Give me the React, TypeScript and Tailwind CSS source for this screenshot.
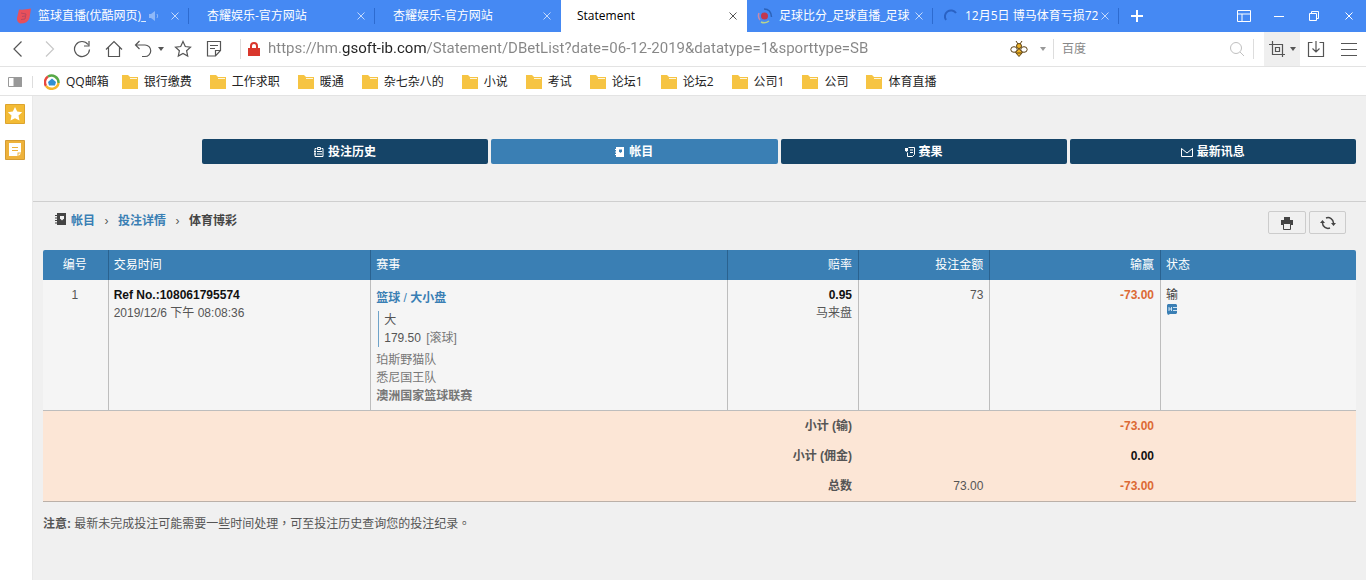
import type { ReactNode } from "react";
import clsx from "clsx";

type Tab = { id: number; title: string; icon?: ReactNode; muted?: boolean; active?: boolean };

type Bet = {
  no: number;
  refNo: string;
  time: string;
  sport: string;
  market: string;
  pick: string;
  line: string;
  live: string;
  home: string;
  away: string;
  league: string;
  odds: string;
  oddsType: string;
  stake: string;
  winLoss: string;
  status: string;
};

const bookmarks = [
  "银行缴费",
  "工作求职",
  "暖通",
  "杂七杂八的",
  "小说",
  "考试",
  "论坛1",
  "论坛2",
  "公司1",
  "公司",
  "体育直播",
];

const bets: Bet[] = [
  {
    no: 1,
    refNo: "108061795574",
    time: "2019/12/6 下午 08:08:36",
    sport: "篮球",
    market: "大小盘",
    pick: "大",
    line: "179.50",
    live: "[滚球]",
    home: "珀斯野猫队",
    away: "悉尼国王队",
    league: "澳洲国家篮球联赛",
    odds: "0.95",
    oddsType: "马来盘",
    stake: "73",
    winLoss: "-73.00",
    status: "输",
  },
];

const totals = [
  { label: "小计 (输)", stake: "", winLoss: "-73.00" },
  { label: "小计 (佣金)", stake: "", winLoss: "0.00" },
  { label: "总数", stake: "73.00", winLoss: "-73.00" },
];

function Icon({ size = 18, className, children }: { size?: number; className?: string; children: ReactNode }) {
  return (
    <svg
      width={size}
      height={size}
      viewBox={`0 0 ${size} ${size}`}
      fill="none"
      stroke="currentColor"
      aria-hidden="true"
      className={clsx("shrink-0", className)}
    >
      {children}
    </svg>
  );
}

function Caret({ className }: { className?: string }) {
  return (
    <Icon size={6} className={className}>
      <path d="M0 1h6L3 5z" fill="currentColor" stroke="none" />
    </Icon>
  );
}

function CloseIcon() {
  return (
    <Icon size={10}>
      <path d="M1.5 1.5l7 7M8.500 1.500l-7 7" />
    </Icon>
  );
}

const tabs: Tab[] = [
  {
    id: 1,
    title: "篮球直播(优酷网页)_",
    muted: true,
    icon: (
      <Icon size={16}>
        <path d="M3 1.500Q9 2 15 .5L13.500 10Q12 15.500 4 15.500Q.5 13.500 1 10z" fill="#e8505b" stroke="none" />
        <path d="M5 5l5 1-1 5-4 .5M6 8.500l3-.5" stroke="#b9475f" />
      </Icon>
    ),
  },
  { id: 2, title: "杏耀娱乐-官方网站" },
  { id: 3, title: "杏耀娱乐-官方网站" },
  { id: 4, title: "Statement", active: true },
  {
    id: 5,
    title: "足球比分_足球直播_足球",
    icon: (
      <Icon size={16}>
        <circle cx="7.500" cy="8" r="3.500" fill="#c2384f" stroke="none" />
        <path d="M2 5Q.5 9 3 12" stroke="#c98aa8" strokeWidth="1.500" />
        <path d="M4 14q4 2 8-1" stroke="#b7d38d" strokeWidth="1.500" />
        <path d="M7 1q7 0 7.500 8" stroke="#2c62b8" strokeWidth="1.500" />
      </Icon>
    ),
  },
  {
    id: 6,
    title: "12月5日 博马体育亏损72",
    icon: (
      <Icon size={16}>
        <path d="M3 12A6 6 0 1 1 13 5" stroke="#2a62c4" strokeWidth="2" />
      </Icon>
    ),
  },
];

function TabStrip() {
  return (
    <header className="flex h-8 bg-[#4589f3] pl-[3px] text-white">
      <div role="tablist" className="flex min-w-0">
        {tabs.map((tab) => (
          <div
            key={tab.id}
            className={clsx(
              "flex w-[186px] min-w-0 items-center",
              tab.icon ? "pl-2.5" : tab.active ? "pl-4" : "pl-[18px]",
              tab.active && "bg-white text-black",
            )}
          >
            <button
              type="button"
              role="tab"
              aria-selected={!!tab.active}
              className={clsx("flex min-w-0 flex-1 items-center gap-1.5 text-left", tab.muted && "pl-[3px]")}
            >
              {tab.icon}
              <span className="overflow-hidden whitespace-nowrap">{tab.title}</span>
              {tab.muted && (
                <Icon size={12} className="-ml-1 text-[#8fb8f8]">
                  <path d="M1 4h2l4-3v10L3 8H1z" fill="currentColor" stroke="none" />
                  <path d="M9 4q1.500 2 0 4" />
                </Icon>
              )}
            </button>
            <button type="button" aria-label="关闭标签" className={tab.active ? "text-[#555]" : "text-[#c3d9fc]"}>
              <CloseIcon />
            </button>
            <span className={clsx("ml-2 h-4 w-px", !tab.active && tab.id !== 3 && "bg-[#2d6bd0]")} />
          </div>
        ))}
      </div>
      <button type="button" aria-label="新标签" className="flex w-9 items-center justify-center">
        <Icon size={12}>
          <path d="M6 0v12M0 6h12" strokeWidth="2" />
        </Icon>
      </button>
      <div className="ml-auto flex">
        <button type="button" aria-label="布局" className="flex w-[35px] items-center justify-center">
          <Icon size={14}>
            <path d="M.5 1.500h13v11H.5zM.5 5h13M5 5v7.500" />
          </Icon>
        </button>
        <button type="button" aria-label="最小化" className="flex w-[35px] items-center justify-center">
          <Icon size={10}>
            <path d="M0 5.500h10" />
          </Icon>
        </button>
        <button type="button" aria-label="还原" className="flex w-[35px] items-center justify-center">
          <Icon size={10}>
            <path d="M.5 2.500h7v7h-7zM2.500 2.500v-2h7v7h-2" />
          </Icon>
        </button>
        <button type="button" aria-label="关闭" className="flex w-[35px] items-center justify-center">
          <CloseIcon />
        </button>
      </div>
    </header>
  );
}

function AddressBar() {
  return (
    <div className="flex h-[35px] items-center border-b border-[#e3e3e3] bg-white text-[#555]">
      <button type="button" aria-label="后退" className="flex w-8 justify-center pl-1">
        <Icon>
          <path d="M12.500 1.500L5 9l7.500 7.500" strokeWidth="1.200" />
        </Icon>
      </button>
      <button type="button" aria-label="前进" className="flex w-9 justify-center text-[#c8c8c8]">
        <Icon>
          <path d="M5 1.500L12.500 9 5 16.500" strokeWidth="1.200" />
        </Icon>
      </button>
      <button type="button" aria-label="刷新" className="flex w-7 justify-center">
        <Icon>
          <path d="M15 4.500A7.500 7.500 0 1 0 16.500 9.500M16 1v5h-5" strokeWidth="1.200" />
        </Icon>
      </button>
      <button type="button" aria-label="主页" className="flex w-9 justify-center">
        <Icon>
          <path d="M1 9.500L9 1.500l8 8M3.500 7.500v9h11v-9" strokeWidth="1.200" />
        </Icon>
      </button>
      <button type="button" aria-label="恢复" className="flex items-center gap-1.5 pl-0.5">
        <Icon>
          <path d="M5.500 1L1.500 5l4 4M1.500 5H11a5.500 5.500 0 0 1 0 11.500H8" strokeWidth="1.200" />
        </Icon>
        <Caret />
      </button>
      <button type="button" aria-label="收藏" className="flex w-8 justify-center pl-1.5">
        <Icon>
          <path
            d="M9 1.500l2.300 5 5.200.6-3.900 3.600 1.100 5.300L9 13.400 4.300 16l1.100-5.300L1.500 7.100l5.200-.6z"
            strokeWidth="1.200"
          />
        </Icon>
      </button>
      <button type="button" aria-label="笔记" className="flex w-9 justify-center">
        <Icon>
          <path d="M2.500 1.500h13v9l-5 5.500h-8zM10.500 16v-5.500h5M5 5.500h8M5 8.500h5" strokeWidth="1.200" />
        </Icon>
      </button>
      <span className="ml-2 h-5 w-px bg-[#ddd]" />
      <Icon size={14} className="ml-1.5">
        <path d="M1 6h12v8H1z" fill="#d9372c" stroke="none" />
        <path d="M4 6.500V4a3 3 0 0 1 6 0v2.500" stroke="#d9372c" strokeWidth="2" />
      </Icon>
      <input
        type="text"
        aria-label="网址"
        defaultValue="https://hm.gsoft-ib.com/Statement/DBetList?date=06-12-2019&datatype=1&sporttype=SB"
        className="ml-[7px] min-w-0 flex-1 bg-[linear-gradient(90deg,#868686_74px,#222_74px,#222_158px,#868686_158px)] bg-clip-text font-['Roboto',sans-serif] text-[15px] text-transparent outline-none"
      />
      <button type="button" aria-label="插件" className="flex items-center gap-3">
        <Icon>
          <path d="M6 1l2 3M12 1l-2 3" stroke="#5b4012" />
          <circle cx="9" cy="6" r="2.500" fill="#f0b426" stroke="#5b4012" />
          <path d="M9 8.500l3.500 4L9 16.500l-3.500-4z" fill="#f0b426" stroke="#5b4012" />
          <path d="M6 13h6" stroke="#5b4012" />
          <ellipse cx="4" cy="9.500" rx="3.200" ry="2.800" fill="#fff" stroke="#5b4012" />
          <ellipse cx="14" cy="9.500" rx="3.200" ry="2.800" fill="#fff" stroke="#5b4012" />
        </Icon>
        <Caret className="text-[#999]" />
      </button>
      <span className="ml-[7px] h-5 w-px bg-[#ddd]" />
      <input
        type="search"
        aria-label="搜索"
        placeholder="百度"
        className="w-[175px] pl-2 outline-none placeholder:text-[#888]"
      />
      <button type="button" aria-label="搜索" className="text-[#c0c0c0]">
        <Icon size={16}>
          <circle cx="7" cy="7" r="5.500" />
          <path d="M11 11l4 4" />
        </Icon>
      </button>
      <span className="ml-2 h-5 w-px bg-[#ddd]" />
      <button
        type="button"
        aria-label="截图"
        className="ml-2.5 flex h-full w-9 items-center justify-center gap-1 bg-[#efefef]"
      >
        <Icon>
          <path d="M4.500 1v13.500H17M1 4.500h13.500V17M7.500 7.500h4v4h-4z" strokeWidth="1.200" />
        </Icon>
        <Caret />
      </button>
      <button type="button" aria-label="下载" className="flex w-8 justify-center">
        <Icon>
          <path d="M5.500 2.500h-4v14h15v-14h-4M9 1v11M5.500 8.500L9 12l3.500-3.500" strokeWidth="1.200" />
        </Icon>
      </button>
      <button type="button" aria-label="菜单" className="flex w-[34px] justify-center">
        <Icon>
          <path d="M1 3.500h16M1 9.500h16M1 15.500h16" />
        </Icon>
      </button>
    </div>
  );
}

function BookmarkBar() {
  return (
    <nav className="flex h-[29px] items-center border-b border-[#e3e3e3] bg-white pt-0.5 pl-2 text-[#222]">
      <button type="button" aria-label="侧边栏" className="text-[#999]">
        <Icon size={14}>
          <path d="M.5 2.500h13v9H.5z" />
          <path d="M6 2.500h7.500v9H6z" fill="currentColor" />
        </Icon>
      </button>
      <span className="mr-[11px] ml-2.5 h-3 w-px bg-[#ddd]" />
      <a href="#qq" className="mr-[13px] flex items-center gap-1.5">
        <Icon size={16}>
          <path d="M2 12A7 7 0 0 1 4 2.500" stroke="#e8483c" strokeWidth="2.500" />
          <path d="M4 2.500A7 7 0 0 1 14.500 9" stroke="#58a947" strokeWidth="2.500" />
          <path d="M14.500 9A7 7 0 0 1 2 12" stroke="#f3b52c" strokeWidth="2.500" />
          <path d="M8 4.500l4 3.500-1 3.500H5L4 8z" fill="#2f8fd3" stroke="none" />
        </Icon>
        QQ邮箱
      </a>
      <ul className="flex gap-[18px]">
        {bookmarks.map((name) => (
          <li key={name}>
            <a href="#folder" className="flex items-center gap-1.5 whitespace-nowrap">
              <Icon size={16}>
                <path d="M0 1h6l2 2h8v12H0z" fill="#f6c443" stroke="none" />
                <path d="M8 4.500h7" stroke="#fff6dc" />
              </Icon>
              {name}
            </a>
          </li>
        ))}
      </ul>
    </nav>
  );
}

function SideRail() {
  return (
    <aside className="flex w-[33px] shrink-0 flex-col gap-4 border-r border-[#e9e9e9] bg-white pt-2 pl-[5px]">
      <button type="button" aria-label="收藏夹">
        <Icon size={20}>
          <path d="M.5.5h19v19H.5z" fill="#f3bb35" stroke="#dda42d" />
          <path d="M10 3l2.200 4.600 5 .6-3.700 3.400 1 5L10 14.200 5.500 16.600l1-5L2.800 8.200l5-.6z" fill="#fff" stroke="none" />
        </Icon>
      </button>
      <button type="button" aria-label="便签">
        <Icon size={20}>
          <path d="M.5.5h19v19H.5z" fill="#eeb23b" stroke="#d59c33" />
          <path d="M4 3h12v9.500h-3.500V16H4z" fill="#fff" stroke="none" />
          <path d="M13.500 16v-2.500H16z" fill="#fff" stroke="none" />
          <path d="M7 7.500h6M7 10.500h6" stroke="#eeb23b" />
        </Icon>
      </button>
    </aside>
  );
}

const menu = [
  {
    label: "投注历史",
    icon: (
      <Icon size={10}>
        <path d="M3.500.5h3v2h-3zM2.500 1.500H1v8h8v-8H7.500M3 4.500h5M3 7h5M0 4.500h2M0 7h2" />
      </Icon>
    ),
  },
  {
    label: "帐目",
    active: true,
    icon: (
      <Icon size={10}>
        <path d="M1 0h8v10H1z" fill="currentColor" stroke="none" />
        <path d="M0 2.500h2M0 5h2M0 7.500h2" />
        <path d="M4 2.500h3v2L5.500 6 4 4.500z" fill="#3a7fb4" stroke="none" />
      </Icon>
    ),
  },
  {
    label: "赛果",
    icon: (
      <Icon size={10}>
        <path d="M3.500.5h6v7l-2 2h-5v-4M5 3h3M5 5.500h3" />
        <path d="M0 1h3v2.500L1.500 5 0 3.500z" fill="currentColor" stroke="none" />
      </Icon>
    ),
  },
  {
    label: "最新讯息",
    icon: (
      <Icon size={12}>
        <path d="M.5 2.500v8h11v-8L6 7z" />
      </Icon>
    ),
  },
];

function StatementPage() {
  return (
    <main className="min-w-0 flex-1 bg-[#f0f0f0] pb-12 font-['Liberation_Sans','Noto_Sans_CJK_SC',sans-serif] leading-[18px] text-[#555]">
      <nav className="flex gap-[3px] border-b border-[#cfcfcf] pt-[43px] pr-2.5 pb-[37px] pl-[169px]">
        {menu.map((item) => (
          <a
            key={item.label}
            href="#menu"
            className={clsx(
              "flex h-[25px] flex-1 items-center justify-center gap-1 rounded-xs font-bold text-white",
              item.active ? "bg-[#3a7fb4]" : "bg-[#154467]",
            )}
          >
            {item.icon}
            {item.label}
          </a>
        ))}
      </nav>

      <section className="px-2.5">
        <div className="flex h-12 items-start justify-between pt-[9px] pr-2.5 pl-3">
          <div className="flex items-center gap-1 pt-px font-bold text-[#3a7fb4]">
            <Icon size={12} className="mb-1 text-[#444]">
              <path d="M2 0h9v12H2z" fill="currentColor" stroke="none" />
              <path d="M0 2.500h3M0 5h3M0 7.500h3M0 10h3" />
              <path d="M5 3h4v2.500L7 7.500 5 5.500z" fill="#f0f0f0" stroke="none" />
            </Icon>
            <a href="#account">帐目</a>
            <span className="w-[15px] text-center font-normal text-[#555]">›</span>
            <a href="#detail">投注详情</a>
            <span className="w-[15px] text-center font-normal text-[#555]">›</span>
            <span className="text-[#444]">体育博彩</span>
          </div>
          <div className="flex gap-[3px] text-[#444]">
            <button
              type="button"
              aria-label="打印"
              className="flex h-[23px] w-[38px] items-center justify-center rounded-xs border border-[#ccc]"
            >
              <Icon size={14}>
                <path d="M4 1h6v3h3v5H1V4h3z" fill="currentColor" stroke="none" />
                <path d="M3.500 7.500h7v6h-7z" fill="#f0f0f0" />
              </Icon>
            </button>
            <button
              type="button"
              aria-label="刷新"
              className="flex h-[23px] w-[37px] items-center justify-center rounded-xs border border-[#ccc]"
            >
              <Icon size={16}>
                <path d="M6 3a5.500 5.500 0 0 1 7.500 5M10 13A5.500 5.500 0 0 1 2.500 8" strokeWidth="1.500" />
                <path d="M11 8h5l-2.500 3zM0 8h5L2.500 5z" fill="currentColor" stroke="none" />
              </Icon>
            </button>
          </div>
        </div>

        <table className="w-full table-fixed border-separate border-spacing-0">
          <colgroup>
            <col className="w-[5%]" />
            <col className="w-[20%]" />
            <col />
            <col className="w-[10%]" />
            <col className="w-[10%]" />
            <col className="w-[13%]" />
            <col className="w-[195px]" />
          </colgroup>
          <thead className="text-white [&_th]:border-[#2a628f] [&_th]:bg-[#3a7fb4] [&_th]:py-1.5 [&_th]:pr-1.5 [&_th]:pl-[5px] [&_th]:font-normal [&_th:not(:last-child)]:border-r">
            <tr>
              <th className="rounded-tl-xs text-center">编号</th>
              <th className="text-left">交易时间</th>
              <th className="text-left">赛事</th>
              <th className="text-right">赔率</th>
              <th className="text-right">投注金额</th>
              <th className="text-right">输赢</th>
              <th className="rounded-tr-xs text-left">状态</th>
            </tr>
          </thead>
          <tbody className="[&_td]:border-b [&_td]:border-[#bdbdbd] [&_td]:bg-[#f5f5f5] [&_td]:pt-1.5 [&_td]:pr-1.5 [&_td]:pb-[5px] [&_td]:pl-[5px] [&_td]:align-top [&_td:not(:last-child)]:border-r">
            {bets.map((bet) => (
              <tr key={bet.refNo}>
                <td className="text-center">{bet.no}</td>
                <td>
                  <b className="block text-[#111]">Ref No.:{bet.refNo}</b>
                  {bet.time}
                </td>
                <td className="text-[#777]">
                  <div className="pt-[3px] text-[#3a7fb4]">
                    <b>{bet.sport}</b> / <b>{bet.market}</b>
                  </div>
                  <div className="my-1 ml-0.5 border-l border-[#6fa3c9] pl-[5px] text-[#555]">
                    <div>{bet.pick}</div>
                    <div>
                      {bet.line} <span className="ml-0.5 text-[#777]">{bet.live}</span>
                    </div>
                  </div>
                  <div>{bet.home}</div>
                  <div>{bet.away}</div>
                  <b className="block">{bet.league}</b>
                </td>
                <td className="text-right">
                  <b className="block text-[#111]">{bet.odds}</b>
                  {bet.oddsType}
                </td>
                <td className="text-right">{bet.stake}</td>
                <td className="text-right font-bold text-[#dc6a35]">{bet.winLoss}</td>
                <td className="text-[#444]">
                  {bet.status}
                  <Icon size={12}>
                    <path d="M2 0h8l1 1v8l-1 1H4l-2 1-1-2V1z" fill="#3a7fb4" stroke="none" />
                    <path d="M3 3v4M3 5h2M5.500 3v4M7 3.500h4M7 6.500h4" stroke="#cfe3f2" />
                  </Icon>
                </td>
              </tr>
            ))}
          </tbody>
          <tfoot className="[&_td]:bg-[#fce6d6] [&_td]:py-1.5 [&_td]:pr-[7px] [&_td]:text-right [&_th]:bg-[#fce6d6] [&_th]:py-1.5 [&_th]:pr-[7px] [&_th]:text-right [&_tr:last-child>*]:border-b [&_tr:last-child>*]:border-[#bbb0a8]">
            {totals.map((row) => (
              <tr key={row.label}>
                <th colSpan={4} scope="row" className="font-bold">
                  {row.label}
                </th>
                <td>{row.stake}</td>
                <td className={clsx("font-bold", row.winLoss.startsWith("-") ? "text-[#dc6a35]" : "text-[#111]")}>
                  {row.winLoss}
                </td>
                <td />
              </tr>
            ))}
          </tfoot>
        </table>

        <p lang="zh-TW" className="mt-[13px] font-['Liberation_Sans','Noto_Sans_CJK_TC',sans-serif]">
          <b>注意:</b> 最新未完成投注可能需要一些时间处理，可至投注历史查询您的投注纪录。
        </p>
      </section>
    </main>
  );
}

export default function App() {
  return (
    <div className="flex min-h-screen flex-col bg-white font-['Open_Sans','Noto_Sans_CJK_SC',sans-serif] text-xs">
      <TabStrip />
      <AddressBar />
      <BookmarkBar />
      <div className="flex flex-1">
        <SideRail />
        <StatementPage />
      </div>
    </div>
  );
}
